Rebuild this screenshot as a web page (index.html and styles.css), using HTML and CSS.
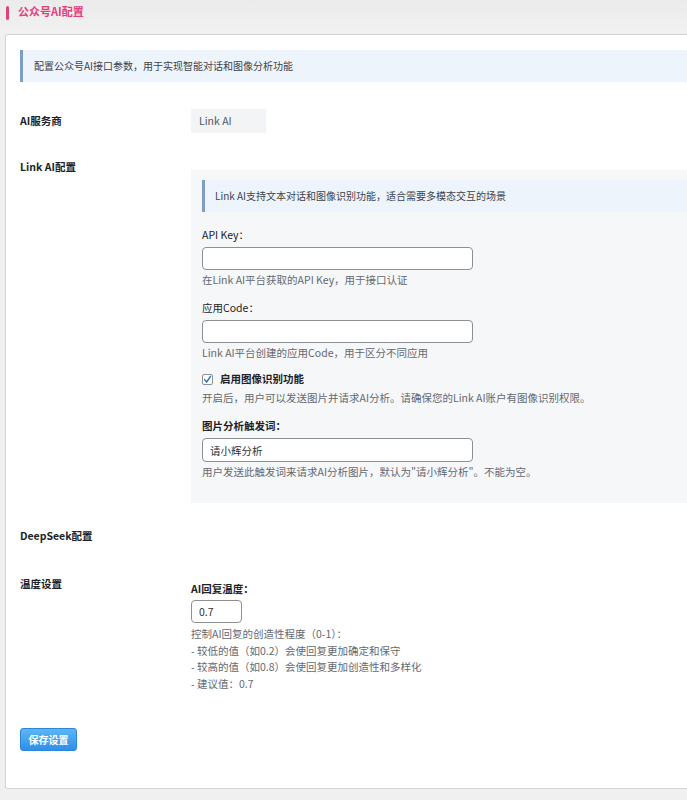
FILE: index.html
```html
<!DOCTYPE html>
<html lang="zh-CN">
<head>
    <meta charset="UTF-8">
    <title>公众号AI配置</title>
    <link rel="stylesheet" href="styles.css">
</head>
<body>
    <div class="page-title">公众号AI配置</div>
    <div class="card">
        <div class="notice">配置公众号AI接口参数，用于实现智能对话和图像分析功能</div>

        <div class="form-row row-provider">
            <div class="row-label">AI服务商</div>
            <div class="row-field">
                <div class="provider-box">Link AI</div>
            </div>
        </div>

        <div class="form-row row-link">
            <div class="row-label">Link AI配置</div>
            <div class="row-field">
                <div class="sub-panel">
                    <div class="notice notice-inner">Link AI支持文本对话和图像识别功能，适合需要多模态交互的场景</div>

                    <div class="field-title">API Key：</div>
                    <input class="text-input" type="text" value="">
                    <div class="hint">在Link AI平台获取的API Key，用于接口认证</div>

                    <div class="field-title gap">应用Code：</div>
                    <input class="text-input" type="text" value="">
                    <div class="hint">Link AI平台创建的应用Code，用于区分不同应用</div>

                    <label class="check-row">
                        <span class="check-box">
                            <svg width="11" height="11" viewBox="0 0 11 11"><path d="M2.6 5.6 L4.6 8 L8.6 2.4" fill="none" stroke="#2271b1" stroke-width="1.4" stroke-linecap="round" stroke-linejoin="round"/></svg>
                        </span>
                        <span class="check-text">启用图像识别功能</span>
                    </label>
                    <div class="hint">开启后，用户可以发送图片并请求AI分析。请确保您的Link AI账户有图像识别权限。</div>

                    <div class="field-title bold gap">图片分析触发词：</div>
                    <input class="text-input tall" type="text" value="请小辉分析">
                    <div class="hint">用户发送此触发词来请求AI分析图片，默认为"请小辉分析"。不能为空。</div>
                </div>
            </div>
        </div>

        <div class="form-row row-deepseek">
            <div class="row-label">DeepSeek配置</div>
            <div class="row-field"></div>
        </div>

        <div class="form-row row-temp">
            <div class="row-label">温度设置</div>
            <div class="row-field temp-field">
                <div class="field-title bold">AI回复温度：</div>
                <input class="text-input small" type="text" value="0.7">
                <div class="hint temp-hint">
                    控制AI回复的创造性程度（0-1）：<br>
                    - 较低的值（如0.2）会使回复更加确定和保守<br>
                    - 较高的值（如0.8）会使回复更加创造性和多样化<br>
                    - 建议值：0.7
                </div>
            </div>
        </div>

        <button class="save-btn">保存设置</button>
    </div>
</body>
</html>
```

FILE: styles.css
```css
html {
    overflow-x: hidden;
}

body {
    margin: 0;
    background-color: #f0f0f1;
    font-family: "Noto Sans CJK SC", "Noto Sans", sans-serif;
    font-size: 10.5px;
    line-height: 16px;
    color: #1d2327;
}

.page-title {
    position: relative;
    height: 34px;
    padding-left: 18px;
    padding-top: 3px;
    box-sizing: border-box;
    color: #e0417c;
    font-size: 11px;
    font-weight: bold;
    background: linear-gradient(#ebebeb, #f1f1f1);
}

.page-title::before {
    content: "";
    position: absolute;
    left: 6px;
    top: 6px;
    width: 3px;
    height: 14px;
    border-radius: 2px;
    background-color: #e0417c;
}

.card {
    margin: 0 -30px 0 5px;
    height: 755px;
    box-sizing: border-box;
    background: #fff;
    border: 1px solid #d4d4d4;
    border-radius: 3px;
    box-shadow: 0 1px 2px rgba(0, 0, 0, 0.06);
    padding: 15px 0 0 14px;
}

.notice {
    height: 32px;
    box-sizing: border-box;
    padding: 8px 0 0 11px;
    background-color: #eef4fb;
    border-left: 3px solid #7d9dc4;
    color: #3c434a;
    font-size: 10px;
}

.form-row {
    display: flex;
}

.row-label {
    width: 171px;
    flex-shrink: 0;
    font-weight: bold;
    font-size: 10.5px;
}

.row-field {
    flex: 1;
}

.row-provider {
    align-items: center;
    padding: 27px 0 15px;
}

.provider-box {
    width: 75px;
    height: 24px;
    box-sizing: border-box;
    padding: 4px 0 0 8px;
    background-color: #f3f4f6;
    color: #50575e;
}

.row-link .row-label {
    padding-top: 11px;
}

.row-link .row-field {
    padding-top: 22px;
}

.sub-panel {
    background-color: #f6f7f9;
    padding: 10px 0 23px 11px;
}

.notice-inner {
    padding-left: 10px;
    margin-bottom: 15px;
}

.field-title {
    color: #1d2327;
    margin-bottom: 4px;
}

.field-title.bold {
    font-weight: bold;
}

.field-title.gap {
    margin-top: 12px;
}

.text-input {
    display: block;
    width: 271px;
    height: 23px;
    box-sizing: border-box;
    margin: 0;
    padding: 0 7px;
    border: 1px solid #8c8f94;
    border-radius: 4px;
    background: #fff;
    font-family: inherit;
    font-size: 10.5px;
    color: #2c3338;
}

.text-input.tall {
    height: 24px;
}

.text-input.small {
    width: 51px;
}

.hint {
    margin-top: 2px;
    color: #646970;
}

.check-row {
    display: flex;
    align-items: center;
    margin-top: 10px;
}

.check-box {
    display: flex;
    width: 11px;
    height: 11px;
    box-sizing: border-box;
    border: 1px solid #8c8f94;
    border-radius: 2px;
    background: #fff;
    align-items: center;
    justify-content: center;
}

.check-box svg {
    flex-shrink: 0;
}

.check-text {
    margin-left: 7px;
    font-weight: bold;
}

.check-row + .hint {
    margin-top: 3px;
}

.row-deepseek {
    padding-top: 25px;
    height: 48px;
}

.row-temp {
    padding-top: 0;
}

.temp-field {
    padding-top: 5px;
}

.temp-field .field-title {
    margin-bottom: 3px;
}

.temp-hint {
    margin-top: 3px;
    line-height: 16.7px;
}

.save-btn {
    display: block;
    margin-top: 35px;
    width: 57px;
    height: 23px;
    padding: 0;
    border: 1px solid #2c86d9;
    border-radius: 3px;
    background: linear-gradient(#5cb6f6, #2f8fe8);
    color: #fff;
    font-family: inherit;
    font-size: 10px;
    font-weight: bold;
    cursor: pointer;
}
```
